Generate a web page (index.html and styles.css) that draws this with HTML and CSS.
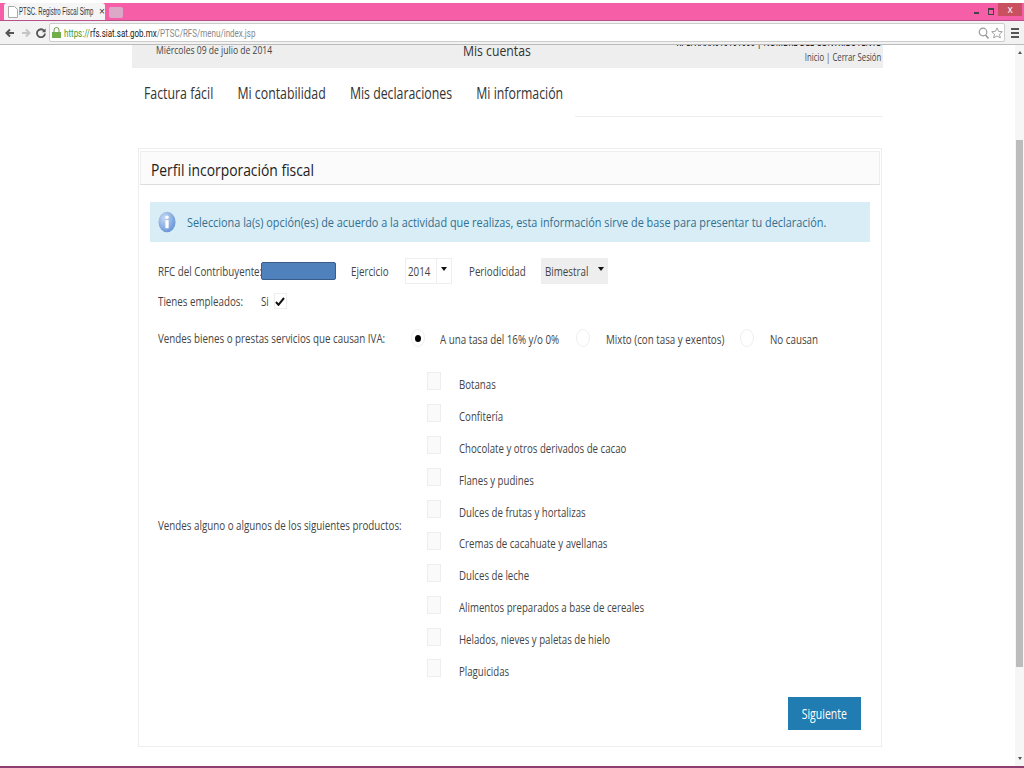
FILE: index.html
```html
<!DOCTYPE html>
<html lang="es">

<head>
    <meta charset="UTF-8">
    <title>PTSC. Registro Fiscal Simplificado</title>
    <link rel="stylesheet" href="styles.css">
</head>

<body>
    <div class="browser-tabs">
        <div class="tab">
            <svg class="tab-icon" width="10" height="12" viewBox="0 0 10 12"><path d="M.5.5h6l3 3v8h-9z" fill="#fff" stroke="#aaa"/></svg>
            <span class="tab-title">PTSC. Registro Fiscal Simp</span>
            <span class="tab-close">×</span>
        </div>
        <div class="tab-new"></div>
        <div class="window-buttons">
            <span class="win-min"></span>
            <span class="win-max"></span>
            <span class="win-close">x</span>
        </div>
    </div>

    <div class="browser-toolbar">
        <svg class="nav-icon" width="10" height="10" viewBox="0 0 10 10"><path d="M9 5H2M5 1.5L1.5 5 5 8.5" fill="none" stroke="#555" stroke-width="2"/></svg>
        <svg class="nav-icon" width="10" height="10" viewBox="0 0 10 10"><path d="M1 5h7M5 1.5L8.5 5 5 8.5" fill="none" stroke="#c4c4c4" stroke-width="2"/></svg>
        <svg class="nav-icon" width="10" height="10" viewBox="0 0 10 10"><path d="M8 2.6A4 4 0 1 0 9 5.5" fill="none" stroke="#555" stroke-width="1.8"/><path d="M9.6 .6v3.6H6z" fill="#555"/></svg>
        <div class="address-bar">
            <svg class="lock" width="9" height="11" viewBox="0 0 9 11"><path d="M2 5V3a2.5 2.5 0 0 1 5 0v2" fill="none" stroke="#6a9c50"/><rect y="5" width="9" height="6" fill="#6fae4a"/></svg>
            <span class="url"><span class="url-https">https://</span><span class="url-host">rfs.siat.sat.gob.mx</span><span class="url-path">/PTSC/RFS/menu/index.jsp</span></span>
            <div class="address-icons">
                <svg width="11" height="12" viewBox="0 0 11 12"><circle cx="5" cy="5" r="3.8" fill="none" stroke="#999" stroke-width="1.2"/><path d="M7.5 8l3 3.4" stroke="#999" stroke-width="1.6"/></svg>
                <svg width="12" height="14" viewBox="0 0 13 13"><path d="M6.5 1l1.7 3.7 4 .4-3 2.7.9 4-3.6-2.1-3.6 2.1.9-4-3-2.7 4-.4z" fill="#fff" stroke="#999"/></svg>
            </div>
        </div>
        <div class="menu-icon"><span></span><span></span><span></span></div>
    </div>

    <div class="viewport">
        <main class="page">
            <div class="top-strip">
                <span class="top-date">Miércoles 09 de julio de 2014</span>
                <span class="top-title">Mis cuentas</span>
                <div class="top-right">
                    <span class="top-user">RFC: XAXX010101000 | NOMBRE DEL CONTRIBUYENTE</span>
                    <span class="top-links">Inicio | Cerrar Sesión</span>
                </div>
            </div>

            <nav class="main-nav">
                <div class="nav-links">
                    <a>Factura fácil</a>
                    <a>Mi contabilidad</a>
                    <a>Mis declaraciones</a>
                    <a>Mi información</a>
                </div>
                <div class="nav-rule"></div>
            </nav>

            <section class="panel">
                <div class="panel-title"><h2>Perfil incorporación fiscal</h2></div>

                <div class="info-box">
                    <svg class="info-icon" width="18" height="24" viewBox="0 0 20 24">
                        <defs>
                            <radialGradient id="infoFill" cx="35%" cy="30%" r="80%"><stop offset="0" stop-color="#c6d8f2"/><stop offset="1" stop-color="#5f8fd6"/></radialGradient>
                        </defs>
                        <ellipse cx="10" cy="12" rx="9.5" ry="11.5" fill="url(#infoFill)"/>
                        <rect x="8.2" y="10" width="3.6" height="9" fill="#fff"/>
                        <circle cx="10" cy="6.8" r="2" fill="#fff"/>
                    </svg>
                    <span class="info-text">Selecciona la(s) opción(es) de acuerdo a la actividad que realizas, esta información sirve de base para presentar tu declaración.</span>
                </div>

                <div class="form-row row-rfc">
                    <span class="lbl lbl-rfc">RFC del Contribuyente:</span>
                    <span class="rfc-mask"></span>
                    <span class="lbl lbl-ejercicio">Ejercicio</span>
                    <span class="select-box select-year"><span class="select-val">2014</span><span class="select-arrow"><span class="caret"></span></span></span>
                    <span class="lbl lbl-periodo">Periodicidad</span>
                    <span class="select-box select-period"><span class="select-val">Bimestral</span><span class="caret"></span></span>
                </div>

                <div class="form-row row-empleados">
                    <span class="lbl lbl-empleados">Tienes empleados:</span>
                    <span class="lbl lbl-si">Si</span>
                    <span class="check-on">
                        <svg width="10" height="9" viewBox="0 0 10 9"><path d="M1 5l2.5 2.8L9 1" fill="none" stroke="#111" stroke-width="2"/></svg>
                    </span>
                </div>

                <div class="form-row row-iva">
                    <span class="lbl lbl-iva">Vendes bienes o prestas servicios que causan IVA:</span>
                    <span class="radio radio-on"></span>
                    <span class="lbl radio-text text-a">A una tasa del 16% y/o 0%</span>
                    <span class="radio"></span>
                    <span class="lbl radio-text text-b">Mixto (con tasa y exentos)</span>
                    <span class="radio"></span>
                    <span class="lbl radio-text">No causan</span>
                </div>

                <div class="products">
                    <span class="lbl lbl-products">Vendes alguno o algunos de los siguientes productos:</span>
                    <ul class="product-list">
                        <li><span class="check"></span><span class="lbl">Botanas</span></li>
                        <li><span class="check"></span><span class="lbl">Confitería</span></li>
                        <li><span class="check"></span><span class="lbl">Chocolate y otros derivados de cacao</span></li>
                        <li><span class="check"></span><span class="lbl">Flanes y pudines</span></li>
                        <li><span class="check"></span><span class="lbl">Dulces de frutas y hortalizas</span></li>
                        <li><span class="check"></span><span class="lbl">Cremas de cacahuate y avellanas</span></li>
                        <li><span class="check"></span><span class="lbl">Dulces de leche</span></li>
                        <li><span class="check"></span><span class="lbl">Alimentos preparados a base de cereales</span></li>
                        <li><span class="check"></span><span class="lbl">Helados, nieves y paletas de hielo</span></li>
                        <li><span class="check"></span><span class="lbl">Plaguicidas</span></li>
                    </ul>
                </div>

                <div class="actions">
                    <button class="next-button"><span>Siguiente</span></button>
                </div>
            </section>
        </main>

        <div class="scrollbar">
            <span class="scroll-up"></span>
            <div class="scroll-track"><div class="scroll-thumb"></div></div>
            <span class="scroll-down"></span>
        </div>
    </div>
    <div class="bottom-line"></div>
</body>

</html>
```

FILE: styles.css
```css
html, body {
    margin: 0;
    padding: 0;
    height: 768px;
    overflow: hidden;
}

body {
    font-family: 'Open Sans', sans-serif;
    font-size: 12px;
    color: #444;
    background-color: #fff;
    display: flex;
    flex-direction: column;
}

/* the screenshot is squeezed sideways, so text is narrowed too */
.lbl,
.select-val,
.top-date,
.top-title,
.top-links,
.top-user,
.info-text,
.tab-title,
.url,
.panel-title h2,
.next-button span {
    display: inline-block;
    white-space: nowrap;
    transform: scaleX(0.815);
    transform-origin: left center;
}

/* browser chrome */
.browser-tabs {
    height: 17px;
    margin-top: 3px;
    background-color: #f65fa8;
    border-bottom: 1px solid #b8508a;
    display: flex;
    align-items: flex-end;
    flex-shrink: 0;
}

.tab {
    width: 101px;
    height: 17px;
    margin-left: 4px;
    background-color: #f5f5f5;
    border-radius: 3px 3px 0 0;
    display: flex;
    align-items: center;
    color: #333;
    font-family: 'Liberation Sans', sans-serif;
    font-size: 10px;
}

.tab-icon {
    margin-left: 4px;
    margin-right: 1px;
}

.tab-title {
    width: 80px;
    flex-shrink: 0;
    transform: scaleX(0.6);
}

.tab-close {
    font-size: 10px;
}

.tab-new {
    width: 14px;
    height: 11px;
    margin-left: 4px;
    margin-bottom: 2px;
    background-color: #dca8c8;
    border-radius: 2px;
}

.window-buttons {
    margin-left: auto;
    margin-right: 2px;
    height: 17px;
    display: flex;
    align-items: center;
}

.win-min {
    width: 5px;
    height: 2px;
    margin-top: 3px;
    margin-right: 9px;
    background-color: #444;
}

.win-max {
    width: 6px;
    height: 7px;
    margin-right: 4px;
    border: 1px solid #444;
    border-top-width: 2px;
    box-sizing: border-box;
}

.win-close {
    width: 24px;
    height: 13px;
    margin-bottom: 4px;
    background-color: #c9505e;
    color: #fff;
    font-size: 10px;
    text-align: center;
    line-height: 13px;
}

.browser-toolbar {
    height: 23px;
    background-color: #f2f2f2;
    border-bottom: 1px solid #bbb;
    display: flex;
    align-items: center;
    flex-shrink: 0;
}

.nav-icon {
    margin-left: 5px;
    width: 10px;
    flex-shrink: 0;
}

.nav-icon:nth-child(2) {
    margin-left: 6px;
}

.address-bar {
    flex: 1;
    height: 19px;
    margin-left: 3px;
    background-color: #fff;
    border: 1px solid #ccc;
    border-radius: 2px;
    box-sizing: border-box;
    display: flex;
    align-items: center;
    padding-left: 2px;
    font-family: 'Roboto', sans-serif;
    font-size: 11.5px;
}

.lock {
    margin-right: 3px;
}

.url {
    transform: scaleX(0.695);
}

.url-https {
    color: #3f9a3a;
}

.url-host {
    color: #222;
}

.url-path {
    color: #888;
}

.address-icons {
    margin-left: auto;
    margin-right: 1px;
    display: flex;
    align-items: center;
    gap: 2px;
}

.menu-icon {
    width: 19px;
    display: flex;
    flex-direction: column;
    align-items: center;
    gap: 2px;
}

.menu-icon span {
    width: 8px;
    height: 2px;
    background-color: #555;
}

/* page */
.viewport {
    flex: 1;
    display: flex;
    min-height: 0;
}

.page {
    flex: 1;
    min-width: 0;
    padding-left: 132px;
    overflow: hidden;
}

.top-strip {
    width: 751px;
    height: 23px;
    background-color: #eee;
    display: flex;
    align-items: flex-start;
    overflow: hidden;
}

.top-date {
    width: 307px;
    margin-left: 24px;
    margin-top: -3px;
    font-size: 11px;
    flex-shrink: 0;
    transform: scaleX(0.78);
}

.top-title {
    margin-top: -5px;
    font-size: 15px;
    color: #333;
}

.top-right {
    margin-left: auto;
    margin-top: -10px;
    margin-right: 2px;
    display: flex;
    flex-direction: column;
    align-items: flex-end;
    font-size: 10.5px;
    line-height: 14px;
}

.top-user {
    height: 15px;
    color: #222;
    font-weight: 600;
    transform: scaleX(0.75);
    transform-origin: right center;
}

.top-links {
    transform: scaleX(0.74);
    transform-origin: right center;
}

.main-nav {
    width: 751px;
    height: 49px;
    display: flex;
    flex-direction: column;
}

.nav-links {
    height: 48px;
    padding-top: 2px;
    padding-left: 12px;
    box-sizing: border-box;
    display: flex;
    gap: 31.4px;
    align-items: center;
    white-space: nowrap;
    font-size: 16px;
    color: #333;
    transform: scaleX(0.77);
    transform-origin: 12px center;
}

.nav-rule {
    height: 1px;
    margin-left: 443px;
    background-color: #eee;
}

.panel {
    width: 744px;
    height: 599px;
    margin-top: 31px;
    margin-left: 6px;
    border: 1px solid #eee;
    box-sizing: border-box;
}

.panel-title {
    height: 34px;
    margin: 2px 1px 0;
    padding-left: 10px;
    background-color: #fbfbfb;
    border: 1px solid #eee;
    border-bottom-color: #ddd;
    box-sizing: border-box;
}

.panel-title h2 {
    margin: 0;
    font-size: 17px;
    font-weight: 400;
    line-height: 36px;
    color: #222;
}

.info-box {
    height: 40px;
    margin: 17px 11px 0;
    background-color: #d9edf7;
    display: flex;
    align-items: center;
    gap: 11px;
    padding-left: 8px;
    font-size: 13px;
    color: #31708f;
}

.info-icon {
    flex-shrink: 0;
}

.info-text {
    transform: scaleX(0.836);
}

.form-row {
    display: flex;
    align-items: center;
    margin-left: 19px;
}

.row-rfc {
    height: 26px;
    margin-top: 16px;
}

.lbl-rfc {
    width: 103px;
}

.rfc-mask {
    width: 75px;
    height: 18px;
    background-color: #4f81bd;
    border: 1px solid #385d8a;
    border-radius: 2px;
    box-sizing: border-box;
}

.lbl-ejercicio {
    margin-left: 15px;
    width: 54px;
}

.select-box {
    height: 26px;
    border: 1px solid #eee;
    box-sizing: border-box;
    display: flex;
    align-items: center;
    color: #444;
}

.select-year {
    width: 47px;
}

.select-year .select-val {
    width: 28px;
    margin-left: 2px;
    flex-shrink: 0;
}

.select-arrow {
    height: 24px;
    border-left: 1px solid #eee;
    display: flex;
    align-items: center;
}

.select-arrow .caret {
    margin-left: 4px;
}

.select-period {
    width: 67px;
    background-color: #eee;
}

.select-period .select-val {
    width: 48px;
    margin-left: 3px;
}

.caret {
    width: 0;
    height: 0;
    margin-left: 5px;
    margin-bottom: 4px;
    border-left: 3px solid transparent;
    border-right: 3px solid transparent;
    border-top: 4px solid #111;
}

.lbl-periodo {
    margin-left: 17px;
    width: 72px;
}

.row-empleados {
    height: 18px;
    margin-top: 8px;
}

.lbl-empleados {
    width: 103px;
}

.check-on {
    width: 13px;
    height: 16px;
    margin-left: 3px;
    border: 1px solid #eee;
    box-sizing: border-box;
    display: flex;
    align-items: center;
    justify-content: center;
}

.row-iva {
    height: 16px;
    margin-top: 20px;
}

.lbl-iva {
    width: 253px;
}

.radio {
    width: 14px;
    height: 18px;
    border: 1px solid #eee;
    border-radius: 50%;
    box-sizing: border-box;
    display: flex;
    align-items: center;
    justify-content: center;
    flex-shrink: 0;
}

.radio-on::before {
    content: "";
    width: 6px;
    height: 7px;
    border-radius: 50%;
    background-color: #000;
}

.radio-text {
    margin-left: 16px;
    margin-top: 3px;
}

.text-a {
    width: 136px;
    margin-left: 15px;
}

.text-b {
    width: 134px;
}

.products {
    display: flex;
    align-items: center;
    margin-top: 22px;
    margin-left: 19px;
}

.lbl-products {
    width: 269px;
    margin-bottom: 4px;
}

.product-list {
    list-style: none;
    margin: 0;
    padding: 0;
}

.product-list li {
    height: 31.9px;
    display: flex;
    align-items: center;
}

.product-list .lbl {
    margin-top: 1px;
    transform: scaleX(0.805);
}

.check {
    width: 14px;
    height: 18px;
    margin-right: 18px;
    margin-bottom: 5px;
    border: 1px solid #eee;
    background-color: #fafafa;
    box-sizing: border-box;
}

.actions {
    display: flex;
    justify-content: flex-end;
    margin-top: 10px;
    margin-right: 20px;
}

.next-button {
    width: 73px;
    height: 33px;
    padding: 0;
    border: none;
    background-color: #217db1;
    color: #fff;
    font-family: 'Open Sans', sans-serif;
    font-size: 15px;
}

.next-button span {
    transform: scaleX(0.7);
    transform-origin: center;
}

/* scrollbar */
.scrollbar {
    width: 9px;
    background-color: #f6f6f6;
    display: flex;
    flex-direction: column;
    align-items: center;
    flex-shrink: 0;
}

.scroll-up,
.scroll-down {
    width: 0;
    height: 0;
    margin: 6px 0;
    border-left: 2px solid transparent;
    border-right: 2px solid transparent;
}

.scroll-up {
    border-bottom: 3px solid #555;
}

.scroll-down {
    border-top: 3px solid #555;
}

.scroll-track {
    flex: 1;
    width: 7px;
}

.scroll-thumb {
    height: 527px;
    margin-top: 80px;
    background-color: #bcbcbc;
}

.bottom-line {
    height: 2px;
    background-color: #8d3f70;
    flex-shrink: 0;
}
```
